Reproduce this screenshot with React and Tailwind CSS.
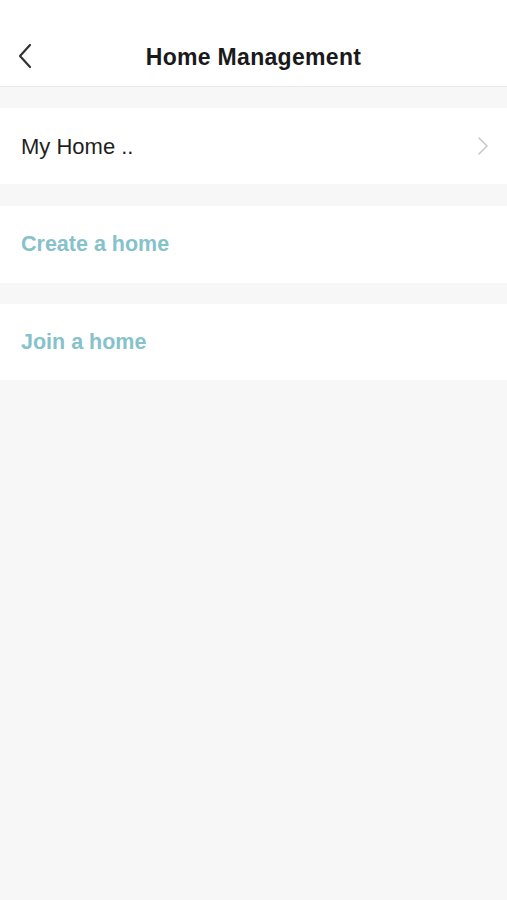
import React from 'react';

const rows = [
    { label: 'My Home ..', kind: 'home', h: 'h-[76px]', mt: 'mt-[21px]' },
    { label: 'Create a home', kind: 'action', h: 'h-[77px]', mt: 'mt-[22px]' },
    { label: 'Join a home', kind: 'action', h: 'h-[76px]', mt: 'mt-[21px]' },
];

export default function App() {
    return (
        <div className="min-h-[900px] w-full bg-[#f7f7f7]" style={{ fontFamily: '"Liberation Sans", Arial, sans-serif' }}>
            <header className="relative flex h-[87px] items-center justify-center border-b border-[#ebebeb] bg-white">
                <button className="absolute left-[16px] top-[43px] p-0 text-[#333333]">
                    <svg width="18" height="26" viewBox="0 0 18 26" fill="none">
                        <path d="M14 2 L4 13 L14 24" stroke="currentColor" strokeWidth="2.2" strokeLinecap="round" strokeLinejoin="round" />
                    </svg>
                </button>
                <h1 className="mt-[28px] text-[23px] font-bold tracking-[0.3px] text-[#1a1a1a]">Home Management</h1>
            </header>

            <div className="flex flex-col">
                {rows.map((r) => (
                    <div key={r.label} className={`${r.mt} ${r.h} flex items-center justify-between bg-white pl-[21px] pr-[17px]`}>
                        {r.kind === 'home' ? (
                            <>
                                <span className="text-[22px] text-[#1f1f1f]">{r.label}</span>
                                <svg width="14" height="20" viewBox="0 0 14 20" fill="none">
                                    <path d="M3 2 L11 10 L3 18" stroke="#c8c8c8" strokeWidth="1.6" strokeLinecap="round" strokeLinejoin="round" />
                                </svg>
                            </>
                        ) : (
                            <span className="text-[21.5px] font-bold text-[#86c2cb]">{r.label}</span>
                        )}
                    </div>
                ))}
            </div>
        </div>
    );
}
